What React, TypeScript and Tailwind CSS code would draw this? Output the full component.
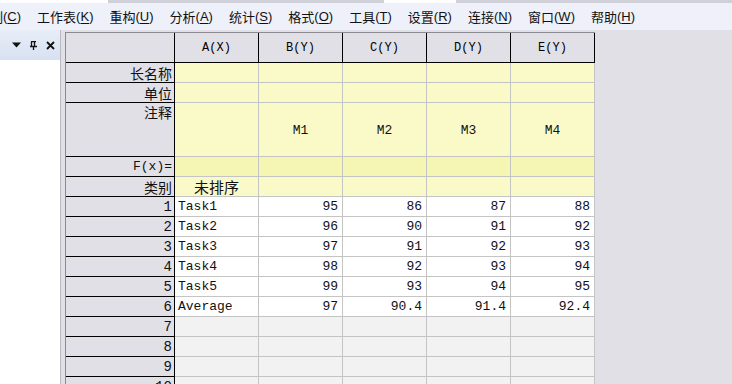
import React from "react";

const menus = [
  { label: "制", key: "C", cut: true },
  { label: "工作表", key: "K" },
  { label: "重构", key: "U" },
  { label: "分析", key: "A" },
  { label: "统计", key: "S" },
  { label: "格式", key: "O" },
  { label: "工具", key: "T" },
  { label: "设置", key: "R" },
  { label: "连接", key: "N" },
  { label: "窗口", key: "W" },
  { label: "帮助", key: "H" },
];

const cols = ["A(X)", "B(Y)", "C(Y)", "D(Y)", "E(Y)"];

const rows: { n: number; name: string; vals: string[] }[] = [
  { n: 1, name: "Task1", vals: ["95", "86", "87", "88"] },
  { n: 2, name: "Task2", vals: ["96", "90", "91", "92"] },
  { n: 3, name: "Task3", vals: ["97", "91", "92", "93"] },
  { n: 4, name: "Task4", vals: ["98", "92", "93", "94"] },
  { n: 5, name: "Task5", vals: ["99", "93", "94", "95"] },
  { n: 6, name: "Average", vals: ["97", "90.4", "91.4", "92.4"] },
];

const cjk = "font-['Noto_Sans_CJK_SC',sans-serif]";
const mono = "font-['Liberation_Mono','Noto_Sans_CJK_SC',monospace]";

function RowHead({
  children,
  h = "h-5",
  top = false,
}: {
  children?: React.ReactNode;
  h?: string;
  top?: boolean;
}) {
  return (
    <div
      className={`w-[109px] shrink-0 ${h} bg-[#e1e0e6] border-r border-b border-black flex justify-end pr-[2px] ${
        top ? "items-start" : "items-center"
      } text-[14px] leading-none text-[#111]`}
    >
      {children}
    </div>
  );
}

function Cell({
  children,
  bg,
  h = "h-5",
  align = "justify-end pr-1",
}: {
  children?: React.ReactNode;
  bg: string;
  h?: string;
  align?: string;
}) {
  return (
    <div
      className={`w-[84px] shrink-0 ${h} ${bg} border-r border-b border-[#c4c4c4] flex items-center ${align} text-[13px] leading-none text-[#111] ${mono}`}
    >
      {children}
    </div>
  );
}

export default function App() {
  return (
    <div className={`w-[732px] h-[384px] overflow-hidden flex flex-col bg-[#e1e0e6] ${cjk}`}>
      {/* title strip */}
      <div className="h-[3px] flex bg-[#cfd0d8]">
        <div className="w-[108px] bg-white" />
        <div className="w-[276px]" />
        <div className="w-[72px] bg-white" />
      </div>

      {/* menu bar */}
      <div className="h-[27px] bg-[#eef0fa] flex items-center text-[13px] text-[#111] whitespace-nowrap">
        {menus.map((m, i) => (
          <div
            key={i}
            className={`px-2 flex items-center ${m.cut ? "ml-[-18px]" : ""}`}
          >
            <span>{m.label}</span>
            <span className="font-['Liberation_Sans',sans-serif]">
              (<span className="underline underline-offset-2">{m.key}</span>)
            </span>
          </div>
        ))}
      </div>

      <div className="flex flex-1 min-h-0">
        {/* left dock panel */}
        <div className="w-[61px] shrink-0 flex flex-col border-r border-[#b8b8c0]">
          <div className="h-[30px] bg-gradient-to-b from-[#e8eef8] to-[#d6e1f1] flex items-center justify-end gap-[9px] pr-[5px] text-[#111]">
            <svg width="9" height="6" viewBox="0 0 9 6">
              <path d="M0 0.5 L9 0.5 L4.5 5.5 Z" fill="#111" />
            </svg>
            <svg width="7" height="9" viewBox="0 0 7 9">
              <path d="M1 0.5 H6 M1.5 0.5 V5 M4.5 0.5 V5 M0 5.5 H7 M3.5 5.5 V9" stroke="#111" strokeWidth="1.3" fill="none" />
            </svg>
            <svg width="9" height="9" viewBox="0 0 9 9">
              <path d="M1 1 L8 8 M8 1 L1 8" stroke="#111" strokeWidth="1.8" />
            </svg>
          </div>
          <div className="flex-1 bg-white" />
        </div>

        {/* grid area */}
        <div className="flex-1 pl-[4px] pt-[2px]">
          <div className="border-l border-t border-[#8a8a90] w-max">
            {/* header row */}
            <div className="flex">
              <div className="w-[109px] h-[30px] bg-[#e1e0e6] border-r border-b border-black" />
              {cols.map((c) => (
                <div
                  key={c}
                  className={`w-[84px] h-[30px] bg-[#e1e0e6] border-r border-b border-black flex items-center justify-center text-[12px] ${mono}`}
                >
                  {c}
                </div>
              ))}
            </div>

            <div className="flex">
              <RowHead>长名称</RowHead>
              {cols.map((c) => (
                <Cell key={c} bg="bg-[#fafac8]" />
              ))}
            </div>
            <div className="flex">
              <RowHead>单位</RowHead>
              {cols.map((c) => (
                <Cell key={c} bg="bg-[#fafac8]" />
              ))}
            </div>
            <div className="flex">
              <RowHead h="h-[54px] pt-[2px]" top>
                注释
              </RowHead>
              {["", "M1", "M2", "M3", "M4"].map((m, i) => (
                <Cell key={i} bg="bg-[#fafac8]" h="h-[54px] pt-[2px]" align="justify-center">
                  {m}
                </Cell>
              ))}
            </div>
            <div className="flex">
              <RowHead>
                <span className={`text-[13px] ${mono}`}>F(x)=</span>
              </RowHead>
              {cols.map((c) => (
                <Cell key={c} bg="bg-[#f6f6b4]" />
              ))}
            </div>
            <div className="flex">
              <RowHead>类别</RowHead>
              <Cell bg="bg-[#fafac8]" align="justify-center">
                <span className={`text-[15px] ${cjk}`}>未排序</span>
              </Cell>
              {cols.slice(1).map((c) => (
                <Cell key={c} bg="bg-[#fafac8]" />
              ))}
            </div>

            {rows.map((r) => (
              <div className="flex" key={r.n}>
                <RowHead>
                  <span className={mono}>{r.n}</span>
                </RowHead>
                <Cell bg="bg-white" align="justify-start pl-[3px]">
                  {r.name}
                </Cell>
                {r.vals.map((v, i) => (
                  <Cell key={i} bg="bg-white">
                    {v}
                  </Cell>
                ))}
              </div>
            ))}

            {[7, 8, 9, 10].map((n) => (
              <div className="flex" key={n}>
                <RowHead>
                  <span className={mono}>{n}</span>
                </RowHead>
                {cols.map((c) => (
                  <Cell key={c} bg="bg-[#f2f2f2]" />
                ))}
              </div>
            ))}
          </div>
        </div>
      </div>
    </div>
  );
}
